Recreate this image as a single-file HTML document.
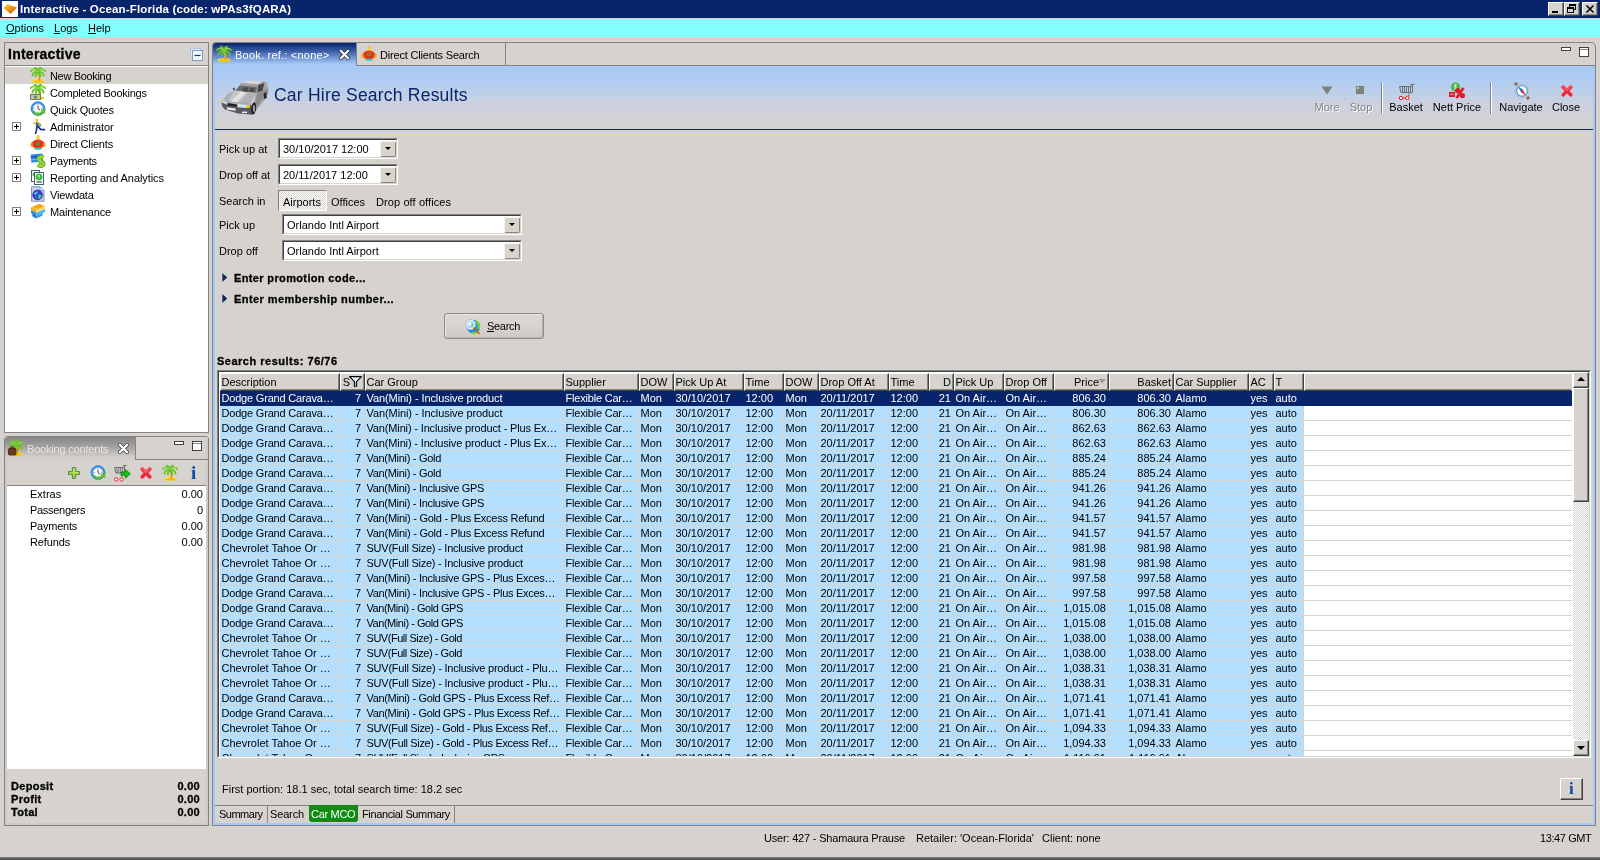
<!DOCTYPE html>
<html><head><meta charset="utf-8"><title>Interactive - Ocean-Florida</title>
<style>
*{box-sizing:border-box}
html,body{margin:0;padding:0}
body{width:1600px;height:860px;background:#d6d3ce;position:relative;overflow:hidden;font-family:"Liberation Sans",sans-serif;font-size:11px;color:#000;line-height:13px}
.abs,.abs>*{position:absolute}
div,span,svg{position:absolute}
.t{white-space:nowrap;height:13px;line-height:13px}
b,u{position:static}
body>*{will-change:transform}
.hb{-webkit-text-stroke:0.3px #000}
/* title */
#title{left:0;top:0;width:1600px;height:18px;background:#08246b}
#title .t{left:20px;top:3px;color:#fff;font-weight:bold;font-size:11.5px;letter-spacing:0.15px}
.wb{top:2px;width:16px;height:14px;background:#d6d3ce;border:1px solid;border-color:#fff #424142 #424142 #fff;box-shadow:inset -1px -1px 0 #848284}
#menu{left:0;top:18px;width:1600px;height:19px;background:#84ffff;border-top:1px solid #d6d3ce}
#menu .t{top:3px}
/* panels */
.panel{box-shadow:inset 0 0 0 1px #848284;background:#d6d3ce}
.white{background:#fff}
.tree .t{left:49px}
.tree svg.ic{left:30px}
.exp{left:11px;width:9px;height:9px;border:1px solid #848284;background:#fff}
.exp:before{content:"";position:absolute;left:1px;top:3px;width:5px;height:1px;background:#000}
.exp:after{content:"";position:absolute;left:3px;top:1px;width:1px;height:5px;background:#000}
/* table */
#tbl{left:217px;top:370px;width:1374px;height:388px;border:1px solid;border-color:#848284 #fff #fff #848284;background:#fff}
#tbl2{left:0;top:0;width:1372px;height:386px;border:1px solid;border-color:#424142 #d6d3ce #d6d3ce #424142;overflow:hidden;background:#fff}
#tin{left:1px;top:1px;width:1352px;height:383px;overflow:hidden;
 background:repeating-linear-gradient(to bottom,#fff 0,#fff 14px,#d6d3ce 14px,#d6d3ce 15px);background-position:0 18px;background-repeat:repeat}
.th-row{left:0;top:0;width:1352px;height:18px;background:#d6d3ce}
.th{top:0;height:18px;background:#d6d3ce;border:1px solid;border-color:#fff #424142 #424142 #fff;box-shadow:inset -1px -1px 0 #848284;overflow:hidden}
.th.fill{border-right-color:#d6d3ce;box-shadow:inset 0 -1px 0 #848284}
.th span{left:0.5px;top:2px;white-space:nowrap;line-height:13px}
.th.r span{left:auto;right:2px}
.th.c1 span{right:14px}
.th.c13 span{right:9px}
.flt{left:8px;top:2px}
.srt{right:2px;top:5px}
.tr{left:0;width:1084px;height:15px;background:#b5dfff}
.tr.sel{width:1352px;background:#08246b;color:#fff}
.td{top:0;height:15px;padding:1px 0 0 1.5px;white-space:nowrap;overflow:hidden;line-height:13px;border-right:1px solid #d6d3ce;border-bottom:1px solid #d6d3ce}
.tr.sel .td{border-color:#08246b}
.td.r{text-align:right;padding-right:3px}
.td.r2{padding-right:2px}
.td.ls{letter-spacing:-0.15px}
.sb{background:#d6d3ce;border:1px solid;border-color:#fff #424142 #424142 #fff;box-shadow:inset -1px -1px 0 #848284}
.sunken{border:1px solid;border-color:#848284 #fff #fff #848284;background:#fff}
.sunken>.in{left:0;top:0;right:0;bottom:0;border:1px solid;border-color:#424142 #d6d3ce #d6d3ce #424142}
.ddb{width:16px;height:16px;background:#d8d4cc;border:1px solid;border-color:#f4f2ee #8a867e #8a867e #f4f2ee;border-radius:2px}
.ddb:after{content:"";position:absolute;left:4px;top:5px;border:3px solid transparent;border-top:3px solid #000;border-bottom:0}
.tb .tl{text-align:center;transform:translateX(-50%)}
.tb .dis{color:#848284;text-shadow:1px 1px 0 #fff}
</style></head><body>

<!-- title bar -->
<div id="title">
 <svg class="ic" width="16" height="16" viewBox="0 0 16 16" style="left:2px;top:1px"><defs><linearGradient id="ag" x1="0" y1="0" x2="1" y2="1"><stop offset="0" stop-color="#ffd028"/><stop offset="0.5" stop-color="#f09018"/><stop offset="1" stop-color="#b84808"/></linearGradient></defs><rect width="16" height="16" fill="#fff"/><path d="M1.4 7L5.6 3.2 15 6.6 8.6 13z" fill="url(#ag)"/></svg>
 <div class="t">Interactive - Ocean-Florida (code: wPAs3fQARA)</div>
 <div class="wb" style="left:1548px"><div style="left:3px;top:8px;width:6px;height:2px;background:#000"></div></div>
 <div class="wb" style="left:1564px"><div style="left:4px;top:1px;width:7px;height:6px;border:1px solid #000;border-top-width:2px"></div><div style="left:2px;top:4px;width:7px;height:6px;border:1px solid #000;border-top-width:2px;background:#d6d3ce"></div></div>
 <div class="wb" style="left:1582px"><svg width="14" height="12" viewBox="0 0 14 12" style="left:0;top:0"><path d="M3.5 2.5l7 7M10.5 2.5l-7 7" stroke="#000" stroke-width="1.6"/></svg></div>
</div>
<!-- menu -->
<div id="menu">
 <div class="t" style="left:6px"><u>O</u>ptions</div>
 <div class="t" style="left:54px"><u>L</u>ogs</div>
 <div class="t" style="left:88px"><u>H</u>elp</div>
</div>

<!-- left top panel -->
<div class="panel" style="left:4px;top:42px;width:205px;height:391px">
 <div class="t hb" style="left:4px;top:5px;font-weight:bold;font-size:14px;letter-spacing:0.25px;height:15px;line-height:15px">Interactive</div>
 <svg class="ic" width="14" height="14" viewBox="0 0 14 14" style="left:186px;top:6px"><rect x="0.5" y="0.5" width="10" height="10" fill="#dcecfc" stroke="#b4c4dc"/><rect x="2.5" y="2.5" width="10" height="10" fill="#f0f8ff" stroke="#8898c0"/><path d="M4.5 7.5h6" stroke="#0c3c7c" stroke-width="1.2"/></svg>
 <div style="left:1px;top:23px;width:203px;height:1px;background:#848284"></div>
 <div class="white tree" style="left:1px;top:24px;width:203px;height:366px">
  <div style="left:0;top:1px;width:203px;height:17px;background:#d6d3ce"></div>
  <svg class="ic" width="16" height="16" viewBox="0 0 16 16" style="left:25px;top:1px"><ellipse cx="8" cy="14" rx="6.6" ry="1.7" fill="#ffe020"/><ellipse cx="8.4" cy="14.5" rx="5" ry="0.9" fill="#f2b800"/><path d="M9 13.6C9.8 11 9.4 8.4 8.2 5.6" stroke="#f2ac1c" stroke-width="1.9" fill="none"/><path d="M9.6 13C10.2 11 9.8 9 9 7" stroke="#c06818" stroke-width="0.8" stroke-dasharray="1 1" fill="none"/><path d="M8 4.8C6 1.8 3 1.6 0.8 4M8 5.2C5 4.2 2.8 6 2.4 8.6M8 4.8C10 1.8 13 1.6 15.2 4M8 5.2C11 4.2 13.2 6 13.6 8.6M8 4.6C8 2.6 9 1 11 0.4M8 4.6C7.6 2.6 6.6 1.2 5 0.6M8 5.4C6.6 6 5.6 7.6 5.8 9.4M8 5.4C9.4 6 10.4 7.6 10.2 9.4" stroke="#66c424" stroke-width="1.8" fill="none" stroke-linecap="round"/><path d="M8 4.8C6.4 2.6 4 2.2 2 3.2M8 4.8C9.6 2.6 12 2.2 14 3.2" stroke="#a4e058" stroke-width="0.9" fill="none"/></svg>
<div class="t" style="left:45px;top:4px;letter-spacing:-0.33px">New Booking</div>
<svg class="ic" width="16" height="16" viewBox="0 0 16 16" style="left:25px;top:18px"><ellipse cx="8" cy="14" rx="6.6" ry="1.7" fill="#ffe020"/><ellipse cx="8.4" cy="14.5" rx="5" ry="0.9" fill="#f2b800"/><path d="M9 13.6C9.8 11 9.4 8.4 8.2 5.6" stroke="#f2ac1c" stroke-width="1.9" fill="none"/><path d="M9.6 13C10.2 11 9.8 9 9 7" stroke="#c06818" stroke-width="0.8" stroke-dasharray="1 1" fill="none"/><path d="M8 4.8C6 1.8 3 1.6 0.8 4M8 5.2C5 4.2 2.8 6 2.4 8.6M8 4.8C10 1.8 13 1.6 15.2 4M8 5.2C11 4.2 13.2 6 13.6 8.6M8 4.6C8 2.6 9 1 11 0.4M8 4.6C7.6 2.6 6.6 1.2 5 0.6M8 5.4C6.6 6 5.6 7.6 5.8 9.4M8 5.4C9.4 6 10.4 7.6 10.2 9.4" stroke="#66c424" stroke-width="1.8" fill="none" stroke-linecap="round"/><path d="M8 4.8C6.4 2.6 4 2.2 2 3.2M8 4.8C9.6 2.6 12 2.2 14 3.2" stroke="#a4e058" stroke-width="0.9" fill="none"/><rect x="0.5" y="10.5" width="10" height="5" fill="#b8c8a0" stroke="#5a6a48" stroke-width="0.8"/><circle cx="5.5" cy="13" r="1.5" fill="#6a7a58"/></svg>
<div class="t" style="left:45px;top:21px;letter-spacing:-0.27px">Completed Bookings</div>
<svg class="ic" width="16" height="16" viewBox="0 0 16 16" style="left:25px;top:35px"><circle cx="8" cy="7.6" r="6.9" fill="#2c96f6"/><circle cx="8" cy="7.6" r="6.9" fill="none" stroke="#1878e0" stroke-width="0.8"/><circle cx="8" cy="7.6" r="4.9" fill="#fafafa" stroke="#b8c4d0" stroke-width="0.6"/><path d="M8 3.4v.9M8 10.9v.9M3.8 7.6h.9M11.3 7.6h.9" stroke="#555" stroke-width="0.8"/><path d="M8 4.8V7.7L10 9" stroke="#303030" stroke-width="0.9" fill="none"/><path d="M3.2 11C5 14.6 10 15.2 13.2 11.6L14.6 13 15.2 8.2 10.6 9.4 12 10.6C9.8 12.8 6.4 12.6 4.8 10.4z" fill="#62cc20" stroke="#3ca010" stroke-width="0.4"/><path d="M6.6 13.6L8.4 15.8 10 13.6z" fill="#62cc20"/></svg>
<div class="t" style="left:45px;top:38px;letter-spacing:-0.25px">Quick Quotes</div>
<svg class="ic" width="16" height="16" viewBox="0 0 16 16" style="left:25px;top:52px"><path d="M5.4 0.8L8.6 1.4 8.2 3.8 5.4 3.4z" fill="#f4c030"/><path d="M3 5.6L5.6 4.6" stroke="#f0b020" stroke-width="1.4"/><path d="M6 4L10 5.4 9 9.6 5.6 8z" fill="#3a62c0"/><path d="M8.6 4.6L11.4 6.6 10.4 9 8.4 8z" fill="#58b830"/><path d="M7.6 4.2L9.4 5 8.8 7.4" stroke="#f0c020" stroke-width="1" fill="none"/><path d="M8.4 9L10.6 11.4 14.4 11.6M7 8.6L6.4 12.4 5.6 15.4" stroke="#182c8c" stroke-width="1.7" fill="none" stroke-linecap="round"/></svg>
<div class="t" style="left:45px;top:55px;letter-spacing:-0.09px">Administrator</div>
<div class="exp" style="left:7px;top:56px"></div>
<svg class="ic" width="16" height="16" viewBox="0 0 16 16" style="left:25px;top:69px"><path d="M6.4 0.6h3.4l-.4 1.2H7z" fill="#f0a818"/><circle cx="8" cy="3.2" r="1.9" fill="#ffd23c"/><circle cx="3" cy="9.6" r="2.6" fill="#f49a1c"/><circle cx="13" cy="9.6" r="2.6" fill="#f49a1c"/><path d="M2.2 7.4C3.4 5.4 5.6 4.6 8 4.6S12.6 5.4 13.8 7.4L12.4 12.6H3.6z" fill="#ee3a1c"/><path d="M4.6 7h6.8v6.4H4.6z" fill="#e82818"/><rect x="6.2" y="7.2" width="3.6" height="3" fill="#30c040"/><path d="M7 8h2M8 7.4v2.6" stroke="#e82818" stroke-width="0.7"/><rect x="5" y="12.6" width="6" height="2.2" fill="#28c8d8"/><path d="M3.2 13.4h1.6M11.2 13.4h1.6" stroke="#f0c020" stroke-width="1.4"/></svg>
<div class="t" style="left:45px;top:72px;letter-spacing:-0.17px">Direct Clients</div>
<svg class="ic" width="17" height="17" viewBox="0 0 17 17" style="left:25px;top:86px"><path d="M0.6 2.6L12.4 1.4 13.2 9.6 1.4 10.8z" fill="#2c8cf0"/><path d="M0.8 4.4L12.6 3.2 12.8 5 1 6.2z" fill="#1458b0"/><path d="M1.2 7.6l6-.6" stroke="#8cc8ff" stroke-width="0.8"/><path d="M13.4 5.6C11.4 4 8 4.8 8.2 7.2 8.4 9.6 13.6 9.2 13.6 11.8 13.6 14.2 10 14.8 7.8 13" stroke="#4a9410" stroke-width="3.6" fill="none"/><path d="M10.8 3v13" stroke="#4a9410" stroke-width="2.4"/><path d="M13.4 5.6C11.4 4 8 4.8 8.2 7.2 8.4 9.6 13.6 9.2 13.6 11.8 13.6 14.2 10 14.8 7.8 13" stroke="#a4e03c" stroke-width="2" fill="none"/><path d="M10.8 3.4v12.2" stroke="#a4e03c" stroke-width="1.1"/></svg>
<div class="t" style="left:45px;top:89px;letter-spacing:-0.27px">Payments</div>
<div class="exp" style="left:7px;top:90px"></div>
<svg class="ic" width="16" height="16" viewBox="0 0 16 16" style="left:25px;top:103px"><rect x="1.5" y="1.5" width="8" height="11" fill="#fff" stroke="#3c6074"/><circle cx="4.4" cy="5.4" r="2" fill="#40c040"/><rect x="4.5" y="3.5" width="9" height="12" fill="#fff" stroke="#3c6074"/><circle cx="9" cy="8" r="3.1" fill="#2cc42c"/><circle cx="9" cy="8" r="3.1" fill="none" stroke="#1c9a1c" stroke-width="0.6"/><path d="M9 6v2.2M9 9.4v.6" stroke="#fff" stroke-width="1.1"/><path d="M6.4 13h5.4" stroke="#202020" stroke-width="1"/></svg>
<div class="t" style="left:45px;top:106px;letter-spacing:-0.07px">Reporting and Analytics</div>
<div class="exp" style="left:7px;top:107px"></div>
<svg class="ic" width="16" height="16" viewBox="0 0 16 16" style="left:25px;top:120px"><path d="M1.5 0.7h8.6L14 4.6v10.7H1.5z" fill="#c4d0ee" stroke="#8098bc"/><path d="M10.1 0.7v3.9H14z" fill="#eef2fb" stroke="#8098bc" stroke-width="0.7"/><circle cx="7.6" cy="9" r="4.9" fill="#3c38d0"/><circle cx="7.6" cy="9" r="4.9" fill="none" stroke="#2c2498" stroke-width="0.6"/><path d="M4 7.6C5 5.6 7 5 8.4 5.6 8 7 6.6 7.4 6.4 8.8 5.4 9.4 4.4 8.8 4 7.6z" fill="#38c8e8"/><path d="M8.6 8.4C10 8 11.4 8.8 11.6 10 11 11.8 9.6 12.8 8.4 12.6 8 11.2 8.2 9.6 8.6 8.4z" fill="#48d080"/><path d="M5 10.6c.8.2 1.4.8 1.6 1.8" stroke="#38c8e8" stroke-width="0.9" fill="none"/></svg>
<div class="t" style="left:45px;top:123px;letter-spacing:-0.17px">Viewdata</div>
<svg class="ic" width="16" height="16" viewBox="0 0 16 16" style="left:25px;top:137px"><path d="M1 4.4L9.4 0.8 15 3.2 6.4 7z" fill="#ffc41c"/><path d="M3 4.2L10 1.4M5 5L12 2.2M7 5.8L13.6 3" stroke="#e88c00" stroke-width="0.8"/><path d="M1 4.4L6.4 7v2.4L1 6.8z" fill="#f0a000"/><path d="M6.4 7L15 3.2v2.4L6.4 9.4z" fill="#ffd860"/><path d="M1 7.2l5.4 2.6v3L1 10.2z" fill="#1c86e0"/><path d="M6.4 9.8L15 6v3l-8.6 3.8z" fill="#48b4f4"/><path d="M2.4 10.8l4 2v2.8l-4-2.4z" fill="#1468c0"/><path d="M6.4 12.8l6.2-2.8v2.4l-6.2 3.2z" fill="#2c9ce8"/></svg>
<div class="t" style="left:45px;top:140px;letter-spacing:-0.18px">Maintenance</div>
<div class="exp" style="left:7px;top:141px"></div>
 </div>
</div>

<!-- left bottom panel -->
<div class="panel" style="left:4px;top:436px;width:205px;height:390px;border-radius:4px 4px 0 0">
 <div style="left:1px;top:1px;width:203px;height:388px;border:2px solid #cdc9cc;border-top:0"></div>
 <div style="left:1px;top:1px;width:131px;height:25px;background:linear-gradient(#848484,#a5a3a2 40%,#d0cdca 80%,#d6d3ce);border-radius:3px 0 0 0"></div>
 <div style="left:131px;top:1px;width:1px;height:23px;background:#848284"></div>
 <div style="left:131px;top:23px;width:73px;height:1px;background:#848284"></div>
 <svg class="ic" width="16" height="16" viewBox="0 0 16 16" style="left:4px;top:4px"><ellipse cx="8" cy="14" rx="6.6" ry="1.7" fill="#ffe020"/><ellipse cx="8.4" cy="14.5" rx="5" ry="0.9" fill="#f2b800"/><path d="M9 13.6C9.8 11 9.4 8.4 8.2 5.6" stroke="#f2ac1c" stroke-width="1.9" fill="none"/><path d="M9.6 13C10.2 11 9.8 9 9 7" stroke="#c06818" stroke-width="0.8" stroke-dasharray="1 1" fill="none"/><path d="M8 4.8C6 1.8 3 1.6 0.8 4M8 5.2C5 4.2 2.8 6 2.4 8.6M8 4.8C10 1.8 13 1.6 15.2 4M8 5.2C11 4.2 13.2 6 13.6 8.6M8 4.6C8 2.6 9 1 11 0.4M8 4.6C7.6 2.6 6.6 1.2 5 0.6M8 5.4C6.6 6 5.6 7.6 5.8 9.4M8 5.4C9.4 6 10.4 7.6 10.2 9.4" stroke="#66c424" stroke-width="1.8" fill="none" stroke-linecap="round"/><path d="M8 4.8C6.4 2.6 4 2.2 2 3.2M8 4.8C9.6 2.6 12 2.2 14 3.2" stroke="#a4e058" stroke-width="0.9" fill="none"/><rect x="0.5" y="8.5" width="7.5" height="6.5" rx="1" fill="#6a3a18" stroke="#3c200c" stroke-width="0.8"/><path d="M2.8 8.5V7h3v1.5" stroke="#3c200c" fill="none"/></svg>
 <div class="t" style="left:23px;top:7px;color:#e6e4e0;letter-spacing:-0.19px">Booking contents</div>
 <svg width="11" height="11" viewBox="0 0 11 11" style="left:114px;top:7px"><path d="M1.8 1.8l7.4 7.4M9.2 1.8l-7.4 7.4" stroke="#505050" stroke-width="3.8" stroke-linecap="round"/><path d="M1.8 1.8l7.4 7.4M9.2 1.8l-7.4 7.4" stroke="#fff" stroke-width="2.2" stroke-linecap="round"/></svg>
 <div style="left:170px;top:5px;width:10px;height:4px;border:1px solid #424142;background:#fff"></div>
 <div style="left:188px;top:5px;width:10px;height:10px;border:1px solid #424142;background:#fff"><div style="left:0;top:1px;width:8px;height:1px;background:#848284"></div></div>
 <div style="left:3px;top:49px;width:199px;height:1px;background:#848284"></div>
 <svg class="ic" width="16" height="16" viewBox="0 0 16 16" style="left:62px;top:29px"><path d="M6.4 2.5h3.2v3.9h3.9v3.2H9.6v3.9H6.4V9.6H2.5V6.4h3.9z" fill="#a8cc48" stroke="#4c9440" stroke-width="1"/><path d="M7.2 3.4h1.6v3.8h3.8v.9H7.2z" fill="#cce47c"/></svg>
<svg class="ic" width="16" height="16" viewBox="0 0 16 16" style="left:86px;top:29px"><circle cx="8" cy="7.6" r="6.9" fill="#2c96f6"/><circle cx="8" cy="7.6" r="6.9" fill="none" stroke="#1878e0" stroke-width="0.8"/><circle cx="8" cy="7.6" r="4.9" fill="#fafafa" stroke="#b8c4d0" stroke-width="0.6"/><path d="M8 3.4v.9M8 10.9v.9M3.8 7.6h.9M11.3 7.6h.9" stroke="#555" stroke-width="0.8"/><path d="M8 4.8V7.7L10 9" stroke="#303030" stroke-width="0.9" fill="none"/><path d="M3.2 11C5 14.6 10 15.2 13.2 11.6L14.6 13 15.2 8.2 10.6 9.4 12 10.6C9.8 12.8 6.4 12.6 4.8 10.4z" fill="#62cc20" stroke="#3ca010" stroke-width="0.4"/><path d="M6.6 13.6L8.4 15.8 10 13.6z" fill="#62cc20"/></svg>
<svg class="ic" width="18" height="18" viewBox="0 0 18 18" style="left:109px;top:28px"><path d="M1.5 3.5H11.5V9H2.8z" fill="none" stroke="#707070"/><path d="M4 3.5v5.5M5.8 3.5v5.5M7.6 3.5v5.5M9.4 3.5v5.5" stroke="#707070" stroke-width="0.9"/><path d="M11.5 3.5V1.5M10 1.5H13.5" stroke="#707070" fill="none"/><path d="M10 9l-.8 3.4" stroke="#608080"/><circle cx="3.2" cy="15.4" r="1.7" fill="#fff" stroke="#e81010" stroke-width="0.9"/><circle cx="8.6" cy="15.4" r="1.7" fill="#fff" stroke="#e81010" stroke-width="0.9"/><path d="M8 8h4.4V5.4l5 4.4-5 4.4v-2.6H8z" fill="#18c018" stroke="#0c7c0c" stroke-width="0.8"/></svg>
<svg class="ic" width="16" height="16" viewBox="0 0 16 16" style="left:134px;top:29px"><path d="M4.2 4.2l7.6 7.6M11.8 4.2l-7.6 7.6" stroke="#f4a0a8" stroke-width="4.6" stroke-linecap="round"/><path d="M4.2 4.2l7.6 7.6M11.8 4.2l-7.6 7.6" stroke="#e8283c" stroke-width="3.3" stroke-linecap="round"/><path d="M4.2 3.8l3.8 3.6 3.8-3.6" stroke="#ff8c94" stroke-width="1" fill="none" stroke-linecap="round"/></svg>
<svg class="ic" width="16" height="16" viewBox="0 0 16 16" style="left:158px;top:29px"><ellipse cx="8" cy="14" rx="6.6" ry="1.7" fill="#ffe020"/><ellipse cx="8.4" cy="14.5" rx="5" ry="0.9" fill="#f2b800"/><path d="M9 13.6C9.8 11 9.4 8.4 8.2 5.6" stroke="#f2ac1c" stroke-width="1.9" fill="none"/><path d="M9.6 13C10.2 11 9.8 9 9 7" stroke="#c06818" stroke-width="0.8" stroke-dasharray="1 1" fill="none"/><path d="M8 4.8C6 1.8 3 1.6 0.8 4M8 5.2C5 4.2 2.8 6 2.4 8.6M8 4.8C10 1.8 13 1.6 15.2 4M8 5.2C11 4.2 13.2 6 13.6 8.6M8 4.6C8 2.6 9 1 11 0.4M8 4.6C7.6 2.6 6.6 1.2 5 0.6M8 5.4C6.6 6 5.6 7.6 5.8 9.4M8 5.4C9.4 6 10.4 7.6 10.2 9.4" stroke="#66c424" stroke-width="1.8" fill="none" stroke-linecap="round"/><path d="M8 4.8C6.4 2.6 4 2.2 2 3.2M8 4.8C9.6 2.6 12 2.2 14 3.2" stroke="#a4e058" stroke-width="0.9" fill="none"/></svg>
<div class="t" style="left:187px;top:28px;font-family:'Liberation Serif',serif;font-weight:bold;font-size:19px;height:18px;line-height:18px;color:#0a4aa8">i</div>
 <div class="white" style="left:3px;top:50px;width:199px;height:283px">
  <div class="t" style="left:23px;top:2px">Extras</div><div class="t" style="right:3px;top:2px">0.00</div>
  <div class="t" style="left:23px;top:18px;letter-spacing:-0.3px">Passengers</div><div class="t" style="right:3px;top:18px">0</div>
  <div class="t" style="left:23px;top:34px;letter-spacing:-0.24px">Payments</div><div class="t" style="right:3px;top:34px">0.00</div>
  <div class="t" style="left:23px;top:50px;letter-spacing:-0.14px">Refunds</div><div class="t" style="right:3px;top:50px">0.00</div>
 </div>
 <div class="t hb" style="left:7px;top:344px;font-weight:bold;letter-spacing:0.3px">Deposit</div><div class="t hb" style="right:9px;top:344px;font-weight:bold;letter-spacing:0.3px">0.00</div>
 <div class="t hb" style="left:7px;top:357px;font-weight:bold;letter-spacing:0.3px">Profit</div><div class="t hb" style="right:9px;top:357px;font-weight:bold;letter-spacing:0.3px">0.00</div>
 <div class="t hb" style="left:7px;top:370px;font-weight:bold;letter-spacing:0.3px">Total</div><div class="t hb" style="right:9px;top:370px;font-weight:bold;letter-spacing:0.3px">0.00</div>
</div>

<!-- main panel -->
<div class="panel" style="left:212px;top:42px;width:1384px;height:784px;border-radius:4px 5px 0 0">
 <!-- blue inner border -->
 <div style="left:1px;top:24px;width:1382px;height:759px;border:2px solid #a5caf7;border-top:0"></div>
 <!-- tabs -->
 <div style="left:1px;top:1px;width:144px;height:23px;background:linear-gradient(#08246b,#3a5ca6 35%,#a5caf7 92%);border-radius:3px 0 0 0;border-right:1px solid #848284"></div>
 <div style="left:145px;top:23px;width:1238px;height:1px;background:#848284"></div>
 <div style="left:293px;top:1px;width:1px;height:22px;background:#848284"></div>
 <svg class="ic" width="16" height="16" viewBox="0 0 16 16" style="left:4px;top:4px"><ellipse cx="8" cy="14" rx="6.6" ry="1.7" fill="#ffe020"/><ellipse cx="8.4" cy="14.5" rx="5" ry="0.9" fill="#f2b800"/><path d="M9 13.6C9.8 11 9.4 8.4 8.2 5.6" stroke="#f2ac1c" stroke-width="1.9" fill="none"/><path d="M9.6 13C10.2 11 9.8 9 9 7" stroke="#c06818" stroke-width="0.8" stroke-dasharray="1 1" fill="none"/><path d="M8 4.8C6 1.8 3 1.6 0.8 4M8 5.2C5 4.2 2.8 6 2.4 8.6M8 4.8C10 1.8 13 1.6 15.2 4M8 5.2C11 4.2 13.2 6 13.6 8.6M8 4.6C8 2.6 9 1 11 0.4M8 4.6C7.6 2.6 6.6 1.2 5 0.6M8 5.4C6.6 6 5.6 7.6 5.8 9.4M8 5.4C9.4 6 10.4 7.6 10.2 9.4" stroke="#66c424" stroke-width="1.8" fill="none" stroke-linecap="round"/><path d="M8 4.8C6.4 2.6 4 2.2 2 3.2M8 4.8C9.6 2.6 12 2.2 14 3.2" stroke="#a4e058" stroke-width="0.9" fill="none"/></svg>
 <div class="t" style="left:23px;top:7px;color:#fff;letter-spacing:0.22px">Book. ref.: &lt;none&gt;</div>
 <svg width="11" height="11" viewBox="0 0 11 11" style="left:127px;top:7px"><path d="M1.8 1.8l7.4 7.4M9.2 1.8l-7.4 7.4" stroke="#303848" stroke-width="3.8" stroke-linecap="round"/><path d="M1.8 1.8l7.4 7.4M9.2 1.8l-7.4 7.4" stroke="#fff" stroke-width="2.2" stroke-linecap="round"/></svg>
 <svg class="ic" width="16" height="16" viewBox="0 0 16 16" style="left:149px;top:4px"><path d="M6.4 0.6h3.4l-.4 1.2H7z" fill="#f0a818"/><circle cx="8" cy="3.2" r="1.9" fill="#ffd23c"/><circle cx="3" cy="9.6" r="2.6" fill="#f49a1c"/><circle cx="13" cy="9.6" r="2.6" fill="#f49a1c"/><path d="M2.2 7.4C3.4 5.4 5.6 4.6 8 4.6S12.6 5.4 13.8 7.4L12.4 12.6H3.6z" fill="#ee3a1c"/><path d="M4.6 7h6.8v6.4H4.6z" fill="#e82818"/><rect x="6.2" y="7.2" width="3.6" height="3" fill="#30c040"/><path d="M7 8h2M8 7.4v2.6" stroke="#e82818" stroke-width="0.7"/><rect x="5" y="12.6" width="6" height="2.2" fill="#28c8d8"/><path d="M3.2 13.4h1.6M11.2 13.4h1.6" stroke="#f0c020" stroke-width="1.4"/></svg>
 <div class="t" style="left:168px;top:7px;letter-spacing:-0.18px">Direct Clients Search</div>
 <div style="left:1349px;top:5px;width:10px;height:4px;border:1px solid #424142;background:#fff"></div>
 <div style="left:1367px;top:5px;width:10px;height:10px;border:1px solid #424142;background:#fff"><div style="left:0;top:1px;width:8px;height:1px;background:#848284"></div></div>

 <!-- header -->
 <div class="tb" style="left:3px;top:24px;width:1378px;height:63px;background:linear-gradient(#a6c9f7 0%,#b0cdf3 25%,#bfd0e8 45%,#cbd0e2 58%,#d0d2da 75%,#d5d2cc 100%)">
  <div style="left:0;top:0;width:1378px;height:64px;background:repeating-linear-gradient(rgba(255,255,255,0.05) 0 1px,rgba(0,0,0,0.012) 1px 2px)"></div>
  <svg class="ic" width="48" height="36" viewBox="0 0 48 36" style="left:6px;top:14px"><path d="M35 13L36.5 4.2 41.5 1 45.5 2.6 47.6 9 46.6 14 44 19 33 33.4 30 34.6z" fill="#a6a6a8"/><path d="M36 13.5L46.8 8.5 47 13 33.5 29z" fill="#8c8c8e"/><path d="M20.4 3.2L23.5 1 41.5 1 36.5 4.6z" fill="#d6d6d6"/><path d="M14.5 10.5L20.4 3.2 36.5 4.6 35.2 13z" fill="#6a6a6c"/><path d="M20.4 3.2L36.5 4.6 36.1 7 18.4 5.6z" fill="#a4a4a6"/><path d="M22.5 7.5h4.5l-.6 4.4-5.6-.5zM29 8h4.6l-.7 4.6-4.5-.4z" fill="#4c4c4e"/><path d="M37.3 5L43.4 3 41.6 10.4 36.4 12.4z" fill="#454547"/><path d="M7.4 21.4L12.9 10.9 35.2 13 29.5 24.2z" fill="#c6c6c8"/><path d="M18 22.8L27 12.3 35.2 13 29.5 24.2z" fill="#b2b2b4"/><path d="M9.5 21.6L20 11.6 25.5 12.2 15.5 22.4z" fill="#e2e2e2"/><path d="M0.8 22L6 14 12.9 10.9 7.4 21.4z" fill="#b0b0b2"/><path d="M0.5 22.4L7.4 21.4 29.5 24.2 31.6 27 31.6 34.7 17 33.6 4 29.4 1 26z" fill="#5a5a5c"/><path d="M0.8 22L7.4 21.4 29.5 24.2 29 27.6 16.4 26.4 6 24.6z" fill="#b4b4b6"/><path d="M1.2 20.4L5.5 21.8 5.7 24.4 1.6 23z" fill="#b8dcf8"/><path d="M0.8 19.6l1.4.6v2l-1.2-.4z" fill="#e8d020"/><path d="M16.6 24.2L25 25 25 27.9 16.8 27.2z" fill="#cfe8fb"/><path d="M25 25L28.2 25.2 28.2 28 25 27.9z" fill="#f2d200"/><path d="M6.6 23L16 24.4 16 26.8 6.8 25.4z" fill="#1c1c1c"/><path d="M5.9 27.2L14.7 28.6 14.7 30.8 5.9 29.4z" fill="#ececec"/><rect x="21" y="31.6" width="5" height="1.5" fill="#f4f4f4"/><ellipse cx="32.6" cy="28.4" rx="2.5" ry="6.2" fill="#262626" transform="rotate(7 32.6 28.4)"/><ellipse cx="33" cy="28.6" rx="1.1" ry="3.6" fill="#9c9c9e"/><path d="M42.6 13.4L45.4 12 45.8 18 43.2 19z" fill="#262626"/><path d="M11.8 8l1.6-.2.8 2.6-1.4.2z" fill="#3c3c3c"/></svg>
  <div class="t" style="left:59px;top:18px;font-size:17.5px;letter-spacing:0.22px;height:22px;line-height:22px;color:#08246b">Car Hire Search Results</div>
  <svg class="ic" width="12" height="9" viewBox="0 0 12 9" style="left:1106px;top:20px"><path d="M0.5 0.5h11L6 8.5z" fill="#808080"/></svg>
<div class="t tl dis" style="left:1112px;top:35px">More</div>
<svg class="ic" width="8" height="8" viewBox="0 0 8 8" style="left:1141px;top:20px"><rect width="8" height="8" fill="#808080"/><rect x="1" y="1" width="2" height="2" fill="#c8c8c8"/></svg>
<div class="t tl dis" style="left:1146px;top:35px">Stop</div>
<svg class="ic" width="18" height="18" viewBox="0 0 18 18" style="left:1182px;top:16px"><path d="M2.5 4.5H15.5V10.5H4z" fill="none" stroke="#707070"/><path d="M5.5 4.5v6M7.5 4.5v6M9.5 4.5v6M11.5 4.5v6M13.5 4.5v6" stroke="#707070" stroke-width="1"/><path d="M15.5 4.5V2.5M13.5 2.5H17.5" stroke="#707070" fill="none"/><path d="M12.5 10.5L11.5 14" stroke="#608080" fill="none"/><path d="M5.8 16h3" stroke="#e01818" stroke-width="0.9"/><circle cx="4" cy="16" r="1.7" fill="#fff" stroke="#e81010" stroke-width="1"/><circle cx="10.4" cy="16" r="1.7" fill="#fff" stroke="#e81010" stroke-width="1"/></svg>
<div class="t tl" style="left:1191px;top:35px">Basket</div>
<svg class="ic" width="18" height="18" viewBox="0 0 18 18" style="left:1233px;top:16px"><circle cx="7.5" cy="5" r="4.6" fill="#48b848"/><path d="M9 3.4C8 2.6 6.2 3 6.2 4.2S9 5.4 9 6.6 7 7.8 6 7M7.6 2v6.4" stroke="#d8f8d0" stroke-width="1" fill="none"/><rect x="1" y="10" width="6" height="5" fill="#e01828"/><rect x="2.2" y="11.6" width="3.4" height="1.4" fill="#ff9098"/><circle cx="9.6" cy="8.6" r="2.6" fill="#e01828"/><circle cx="14.4" cy="13.6" r="2.6" fill="#e01828"/><path d="M15.5 6L8.5 16" stroke="#e01828" stroke-width="2.6"/></svg>
<div class="t tl" style="left:1242px;top:35px">Nett Price</div>
<svg class="ic" width="18" height="18" viewBox="0 0 18 18" style="left:1298px;top:16px"><circle cx="9" cy="9" r="6.8" fill="#f4f8fc" stroke="#b8c4d0" stroke-width="1.6"/><circle cx="9" cy="9" r="5.4" fill="#fff" stroke="#58a0e8" stroke-width="1.4"/><path d="M5 4.4L10.4 8 8 10.2z" fill="#2868d8"/><path d="M13 13.6L7.6 10 10 7.8z" fill="#e83020"/><rect x="1.5" y="0.5" width="3" height="3" fill="#8a6a40" transform="rotate(-35 3 2)"/><rect x="13.5" y="14.5" width="3" height="3" fill="#8a6a40" transform="rotate(-35 15 16)"/></svg>
<div class="t tl" style="left:1306px;top:35px">Navigate</div>
<svg class="ic" width="16" height="16" viewBox="0 0 16 16" style="left:1344px;top:17px"><path d="M4.2 4.2l7.6 7.6M11.8 4.2l-7.6 7.6" stroke="#f4a0a8" stroke-width="4.6" stroke-linecap="round"/><path d="M4.2 4.2l7.6 7.6M11.8 4.2l-7.6 7.6" stroke="#e8283c" stroke-width="3.3" stroke-linecap="round"/><path d="M4.2 3.8l3.8 3.6 3.8-3.6" stroke="#ff8c94" stroke-width="1" fill="none" stroke-linecap="round"/></svg>
<div class="t tl" style="left:1351px;top:35px">Close</div>
<div style="left:1166px;top:16px;width:1px;height:32px;background:#848284"></div><div style="left:1167px;top:16px;width:1px;height:32px;background:#fff"></div>
<div style="left:1275px;top:16px;width:1px;height:32px;background:#848284"></div><div style="left:1276px;top:16px;width:1px;height:32px;background:#fff"></div>
 </div>
 <div style="left:3px;top:87px;width:1378px;height:1px;background:#08246b"></div>

 <!-- form -->
 <div class="t" style="left:7px;top:101px">Pick up at</div>
 <div class="sunken" style="left:66px;top:96px;width:120px;height:21px"><div class="in"></div><div class="t" style="left:4px;top:4px">30/10/2017 12:00</div><div class="ddb" style="left:101px;top:2px"></div></div>
 <div class="t" style="left:7px;top:127px">Drop off at</div>
 <div class="sunken" style="left:66px;top:122px;width:120px;height:21px"><div class="in"></div><div class="t" style="left:4px;top:4px">20/11/2017 12:00</div><div class="ddb" style="left:101px;top:2px"></div></div>
 <div class="t" style="left:7px;top:153px">Search in</div>
 <div style="left:66px;top:148px;width:49px;height:21px;border:1px solid;border-color:#848284 #fff #fff #848284;background:#ebe9e6;background-image:repeating-conic-gradient(#fff 0 25%,#d6d3ce 0 50%);background-size:2px 2px"></div>
 <div class="t" style="left:71px;top:154px">Airports</div>
 <div class="t" style="left:119px;top:154px">Offices</div>
 <div class="t" style="left:164px;top:154px;letter-spacing:0.1px">Drop off offices</div>
 <div class="t" style="left:7px;top:177px">Pick up</div>
 <div class="sunken" style="left:70px;top:172px;width:240px;height:21px"><div class="in"></div><div class="t" style="left:4px;top:4px">Orlando Intl Airport</div><div class="ddb" style="left:221px;top:2px"></div></div>
 <div class="t" style="left:7px;top:203px">Drop off</div>
 <div class="sunken" style="left:70px;top:198px;width:240px;height:21px"><div class="in"></div><div class="t" style="left:4px;top:4px">Orlando Intl Airport</div><div class="ddb" style="left:221px;top:2px"></div></div>
 <svg width="6" height="9" viewBox="0 0 6 9" style="left:10px;top:231px"><path d="M0.4 0l4.8 4.5L0.4 9z" fill="#08246b"/></svg>
 <div class="t hb" style="left:22px;top:230px;font-weight:bold;letter-spacing:0.36px">Enter promotion code...</div>
 <svg width="6" height="9" viewBox="0 0 6 9" style="left:10px;top:252px"><path d="M0.4 0l4.8 4.5L0.4 9z" fill="#08246b"/></svg>
 <div class="t hb" style="left:22px;top:251px;font-weight:bold;letter-spacing:0.44px">Enter membership number...</div>
 <div style="left:232px;top:271px;width:100px;height:26px;border:1px solid #8e8c8a;border-radius:3px;background:linear-gradient(#dcd9d4,#d6d3ce 55%,#cdcac4);box-shadow:inset 1px 1px 0 #e8e6e2,inset -1px -1px 0 #b8b5b0"></div>
 <svg class="ic" width="17" height="17" viewBox="0 0 17 17" style="left:252px;top:276px"><circle cx="9.4" cy="8.8" r="6.8" fill="#1c8cf0"/><path d="M12 3C14.6 4.6 15.6 7.6 14.4 11M8 14.6C9.6 15.4 11.6 15 12.8 14" stroke="#7cd828" stroke-width="2.2" fill="none"/><circle cx="6.6" cy="6.6" r="4.4" fill="#a8dcf4" stroke="#e4ecf4" stroke-width="1.6"/><circle cx="6.6" cy="6.6" r="5.2" fill="none" stroke="#90a0b0" stroke-width="0.5"/><circle cx="5.6" cy="5.8" r="1.6" fill="#f4fcff"/><path d="M7.4 7.4c1 .2 1.8-.4 2-1.4" stroke="#58c070" stroke-width="1.2" fill="none"/><path d="M10 10.2l5 5.2" stroke="#b86820" stroke-width="1.7" stroke-linecap="round"/></svg>
 <div class="t" style="left:275px;top:278px;letter-spacing:-0.3px"><u>S</u>earch</div>
 <div class="t hb" style="left:5px;top:313px;font-weight:bold;letter-spacing:0.5px">Search results: 76/76</div>

 <!-- footer -->
 <div class="t" style="left:10px;top:741px">First portion: 18.1 sec, total search time: 18.2 sec</div>
 <div style="left:1348px;top:736px;width:23px;height:22px;background:#d6d3ce;border:1px solid;border-color:#fff #424142 #424142 #fff;box-shadow:inset -1px -1px 0 #848284"><div class="t" style="left:8px;top:1px;font-family:'Liberation Serif',serif;font-weight:bold;font-size:17px;line-height:17px;height:17px;color:#0a4aa8">i</div></div>
 <div style="left:3px;top:763px;width:1378px;height:1px;background:#848284"></div>
 <div class="t" style="left:7px;top:766px;letter-spacing:-0.5px">Summary</div>
 <div style="left:55px;top:764px;width:1px;height:17px;background:#848284"></div>
 <div class="t" style="left:58px;top:766px;letter-spacing:-0.15px">Search</div>
 <div style="left:97px;top:763px;width:49px;height:17px;background:#128a12;border-radius:0 0 3px 3px"></div>
 <div class="t" style="left:99px;top:766px;color:#fff;letter-spacing:-0.3px">Car MCO</div>
 <div class="t" style="left:150px;top:766px;letter-spacing:-0.37px">Financial Summary</div>
 <div style="left:242px;top:764px;width:1px;height:17px;background:#848284"></div>
</div>

<!-- table -->
<div id="tbl"><div id="tbl2">
 <div id="tin">
<div class="th-row">
<div class="th c0" style="left:0px;width:120px"><span>Description</span></div>
<div class="th r c1" style="left:120px;width:25px"><span>S</span><svg class="flt" width="13" height="11" viewBox="0 0 13 11"><path d="M0.6 0.6h11.8L7.6 5.6v4.6H5.4V5.6z" fill="#e4eefa" stroke="#000" stroke-width="1.1" stroke-linejoin="round"/><path d="M5.9 6v3.6h1.2V6z" fill="#9ab4dc"/></svg></div>
<div class="th c2" style="left:145px;width:199px"><span>Car Group</span></div>
<div class="th c3" style="left:344px;width:75px"><span>Supplier</span></div>
<div class="th c4" style="left:419px;width:35px"><span>DOW</span></div>
<div class="th c5" style="left:454px;width:70px"><span>Pick Up At</span></div>
<div class="th c6" style="left:524px;width:40px"><span>Time</span></div>
<div class="th c7" style="left:564px;width:35px"><span>DOW</span></div>
<div class="th c8" style="left:599px;width:70px"><span>Drop Off At</span></div>
<div class="th c9" style="left:669px;width:40px"><span>Time</span></div>
<div class="th r c10" style="left:709px;width:25px"><span>D</span></div>
<div class="th c11" style="left:734px;width:50px"><span>Pick Up</span></div>
<div class="th c12" style="left:784px;width:50px"><span>Drop Off</span></div>
<div class="th r c13" style="left:834px;width:55px"><span>Price</span><svg class="srt" width="8" height="5" viewBox="0 0 8 5"><path d="M0 0h8L4 4.5z" fill="#9a9a9a"/></svg></div>
<div class="th r c14" style="left:889px;width:65px"><span>Basket</span></div>
<div class="th c15" style="left:954px;width:75px"><span>Car Supplier</span></div>
<div class="th c16" style="left:1029px;width:25px"><span>AC</span></div>
<div class="th c17" style="left:1054px;width:30px"><span>T</span></div>
<div class="th fill" style="left:1084px;width:268px"></div>
</div>
<div class="tr sel" style="top:18px">
<div class="td" style="left:0px;width:120px;letter-spacing:-0.19px">Dodge Grand Carava…</div>
<div class="td r" style="left:120px;width:25px">7</div>
<div class="td" style="left:145px;width:199px;letter-spacing:-0.09px">Van(Mini) - Inclusive product</div>
<div class="td" style="left:344px;width:75px;letter-spacing:-0.2px">Flexible Car…</div>
<div class="td" style="left:419px;width:35px">Mon</div>
<div class="td" style="left:454px;width:70px">30/10/2017</div>
<div class="td" style="left:524px;width:40px">12:00</div>
<div class="td" style="left:564px;width:35px">Mon</div>
<div class="td" style="left:599px;width:70px">20/11/2017</div>
<div class="td" style="left:669px;width:40px">12:00</div>
<div class="td r r2" style="left:709px;width:25px">21</div>
<div class="td" style="left:734px;width:50px">On Air…</div>
<div class="td" style="left:784px;width:50px">On Air…</div>
<div class="td r r2" style="left:834px;width:55px">806.30</div>
<div class="td r r2" style="left:889px;width:65px">806.30</div>
<div class="td" style="left:954px;width:75px">Alamo</div>
<div class="td" style="left:1029px;width:25px">yes</div>
<div class="td" style="left:1054px;width:30px">auto</div>
</div>
<div class="tr" style="top:33px">
<div class="td" style="left:0px;width:120px;letter-spacing:-0.19px">Dodge Grand Carava…</div>
<div class="td r" style="left:120px;width:25px">7</div>
<div class="td" style="left:145px;width:199px;letter-spacing:-0.09px">Van(Mini) - Inclusive product</div>
<div class="td" style="left:344px;width:75px;letter-spacing:-0.2px">Flexible Car…</div>
<div class="td" style="left:419px;width:35px">Mon</div>
<div class="td" style="left:454px;width:70px">30/10/2017</div>
<div class="td" style="left:524px;width:40px">12:00</div>
<div class="td" style="left:564px;width:35px">Mon</div>
<div class="td" style="left:599px;width:70px">20/11/2017</div>
<div class="td" style="left:669px;width:40px">12:00</div>
<div class="td r r2" style="left:709px;width:25px">21</div>
<div class="td" style="left:734px;width:50px">On Air…</div>
<div class="td" style="left:784px;width:50px">On Air…</div>
<div class="td r r2" style="left:834px;width:55px">806.30</div>
<div class="td r r2" style="left:889px;width:65px">806.30</div>
<div class="td" style="left:954px;width:75px">Alamo</div>
<div class="td" style="left:1029px;width:25px">yes</div>
<div class="td" style="left:1054px;width:30px">auto</div>
</div>
<div class="tr" style="top:48px">
<div class="td" style="left:0px;width:120px;letter-spacing:-0.19px">Dodge Grand Carava…</div>
<div class="td r" style="left:120px;width:25px">7</div>
<div class="td" style="left:145px;width:199px;letter-spacing:-0.15px">Van(Mini) - Inclusive product - Plus Ex…</div>
<div class="td" style="left:344px;width:75px;letter-spacing:-0.2px">Flexible Car…</div>
<div class="td" style="left:419px;width:35px">Mon</div>
<div class="td" style="left:454px;width:70px">30/10/2017</div>
<div class="td" style="left:524px;width:40px">12:00</div>
<div class="td" style="left:564px;width:35px">Mon</div>
<div class="td" style="left:599px;width:70px">20/11/2017</div>
<div class="td" style="left:669px;width:40px">12:00</div>
<div class="td r r2" style="left:709px;width:25px">21</div>
<div class="td" style="left:734px;width:50px">On Air…</div>
<div class="td" style="left:784px;width:50px">On Air…</div>
<div class="td r r2" style="left:834px;width:55px">862.63</div>
<div class="td r r2" style="left:889px;width:65px">862.63</div>
<div class="td" style="left:954px;width:75px">Alamo</div>
<div class="td" style="left:1029px;width:25px">yes</div>
<div class="td" style="left:1054px;width:30px">auto</div>
</div>
<div class="tr" style="top:63px">
<div class="td" style="left:0px;width:120px;letter-spacing:-0.19px">Dodge Grand Carava…</div>
<div class="td r" style="left:120px;width:25px">7</div>
<div class="td" style="left:145px;width:199px;letter-spacing:-0.15px">Van(Mini) - Inclusive product - Plus Ex…</div>
<div class="td" style="left:344px;width:75px;letter-spacing:-0.2px">Flexible Car…</div>
<div class="td" style="left:419px;width:35px">Mon</div>
<div class="td" style="left:454px;width:70px">30/10/2017</div>
<div class="td" style="left:524px;width:40px">12:00</div>
<div class="td" style="left:564px;width:35px">Mon</div>
<div class="td" style="left:599px;width:70px">20/11/2017</div>
<div class="td" style="left:669px;width:40px">12:00</div>
<div class="td r r2" style="left:709px;width:25px">21</div>
<div class="td" style="left:734px;width:50px">On Air…</div>
<div class="td" style="left:784px;width:50px">On Air…</div>
<div class="td r r2" style="left:834px;width:55px">862.63</div>
<div class="td r r2" style="left:889px;width:65px">862.63</div>
<div class="td" style="left:954px;width:75px">Alamo</div>
<div class="td" style="left:1029px;width:25px">yes</div>
<div class="td" style="left:1054px;width:30px">auto</div>
</div>
<div class="tr" style="top:78px">
<div class="td" style="left:0px;width:120px;letter-spacing:-0.19px">Dodge Grand Carava…</div>
<div class="td r" style="left:120px;width:25px">7</div>
<div class="td" style="left:145px;width:199px;letter-spacing:-0.3px">Van(Mini) - Gold</div>
<div class="td" style="left:344px;width:75px;letter-spacing:-0.2px">Flexible Car…</div>
<div class="td" style="left:419px;width:35px">Mon</div>
<div class="td" style="left:454px;width:70px">30/10/2017</div>
<div class="td" style="left:524px;width:40px">12:00</div>
<div class="td" style="left:564px;width:35px">Mon</div>
<div class="td" style="left:599px;width:70px">20/11/2017</div>
<div class="td" style="left:669px;width:40px">12:00</div>
<div class="td r r2" style="left:709px;width:25px">21</div>
<div class="td" style="left:734px;width:50px">On Air…</div>
<div class="td" style="left:784px;width:50px">On Air…</div>
<div class="td r r2" style="left:834px;width:55px">885.24</div>
<div class="td r r2" style="left:889px;width:65px">885.24</div>
<div class="td" style="left:954px;width:75px">Alamo</div>
<div class="td" style="left:1029px;width:25px">yes</div>
<div class="td" style="left:1054px;width:30px">auto</div>
</div>
<div class="tr" style="top:93px">
<div class="td" style="left:0px;width:120px;letter-spacing:-0.19px">Dodge Grand Carava…</div>
<div class="td r" style="left:120px;width:25px">7</div>
<div class="td" style="left:145px;width:199px;letter-spacing:-0.3px">Van(Mini) - Gold</div>
<div class="td" style="left:344px;width:75px;letter-spacing:-0.2px">Flexible Car…</div>
<div class="td" style="left:419px;width:35px">Mon</div>
<div class="td" style="left:454px;width:70px">30/10/2017</div>
<div class="td" style="left:524px;width:40px">12:00</div>
<div class="td" style="left:564px;width:35px">Mon</div>
<div class="td" style="left:599px;width:70px">20/11/2017</div>
<div class="td" style="left:669px;width:40px">12:00</div>
<div class="td r r2" style="left:709px;width:25px">21</div>
<div class="td" style="left:734px;width:50px">On Air…</div>
<div class="td" style="left:784px;width:50px">On Air…</div>
<div class="td r r2" style="left:834px;width:55px">885.24</div>
<div class="td r r2" style="left:889px;width:65px">885.24</div>
<div class="td" style="left:954px;width:75px">Alamo</div>
<div class="td" style="left:1029px;width:25px">yes</div>
<div class="td" style="left:1054px;width:30px">auto</div>
</div>
<div class="tr" style="top:108px">
<div class="td" style="left:0px;width:120px;letter-spacing:-0.19px">Dodge Grand Carava…</div>
<div class="td r" style="left:120px;width:25px">7</div>
<div class="td" style="left:145px;width:199px;letter-spacing:-0.3px">Van(Mini) - Inclusive GPS</div>
<div class="td" style="left:344px;width:75px;letter-spacing:-0.2px">Flexible Car…</div>
<div class="td" style="left:419px;width:35px">Mon</div>
<div class="td" style="left:454px;width:70px">30/10/2017</div>
<div class="td" style="left:524px;width:40px">12:00</div>
<div class="td" style="left:564px;width:35px">Mon</div>
<div class="td" style="left:599px;width:70px">20/11/2017</div>
<div class="td" style="left:669px;width:40px">12:00</div>
<div class="td r r2" style="left:709px;width:25px">21</div>
<div class="td" style="left:734px;width:50px">On Air…</div>
<div class="td" style="left:784px;width:50px">On Air…</div>
<div class="td r r2" style="left:834px;width:55px">941.26</div>
<div class="td r r2" style="left:889px;width:65px">941.26</div>
<div class="td" style="left:954px;width:75px">Alamo</div>
<div class="td" style="left:1029px;width:25px">yes</div>
<div class="td" style="left:1054px;width:30px">auto</div>
</div>
<div class="tr" style="top:123px">
<div class="td" style="left:0px;width:120px;letter-spacing:-0.19px">Dodge Grand Carava…</div>
<div class="td r" style="left:120px;width:25px">7</div>
<div class="td" style="left:145px;width:199px;letter-spacing:-0.3px">Van(Mini) - Inclusive GPS</div>
<div class="td" style="left:344px;width:75px;letter-spacing:-0.2px">Flexible Car…</div>
<div class="td" style="left:419px;width:35px">Mon</div>
<div class="td" style="left:454px;width:70px">30/10/2017</div>
<div class="td" style="left:524px;width:40px">12:00</div>
<div class="td" style="left:564px;width:35px">Mon</div>
<div class="td" style="left:599px;width:70px">20/11/2017</div>
<div class="td" style="left:669px;width:40px">12:00</div>
<div class="td r r2" style="left:709px;width:25px">21</div>
<div class="td" style="left:734px;width:50px">On Air…</div>
<div class="td" style="left:784px;width:50px">On Air…</div>
<div class="td r r2" style="left:834px;width:55px">941.26</div>
<div class="td r r2" style="left:889px;width:65px">941.26</div>
<div class="td" style="left:954px;width:75px">Alamo</div>
<div class="td" style="left:1029px;width:25px">yes</div>
<div class="td" style="left:1054px;width:30px">auto</div>
</div>
<div class="tr" style="top:138px">
<div class="td" style="left:0px;width:120px;letter-spacing:-0.19px">Dodge Grand Carava…</div>
<div class="td r" style="left:120px;width:25px">7</div>
<div class="td" style="left:145px;width:199px;letter-spacing:-0.26px">Van(Mini) - Gold - Plus Excess Refund</div>
<div class="td" style="left:344px;width:75px;letter-spacing:-0.2px">Flexible Car…</div>
<div class="td" style="left:419px;width:35px">Mon</div>
<div class="td" style="left:454px;width:70px">30/10/2017</div>
<div class="td" style="left:524px;width:40px">12:00</div>
<div class="td" style="left:564px;width:35px">Mon</div>
<div class="td" style="left:599px;width:70px">20/11/2017</div>
<div class="td" style="left:669px;width:40px">12:00</div>
<div class="td r r2" style="left:709px;width:25px">21</div>
<div class="td" style="left:734px;width:50px">On Air…</div>
<div class="td" style="left:784px;width:50px">On Air…</div>
<div class="td r r2" style="left:834px;width:55px">941.57</div>
<div class="td r r2" style="left:889px;width:65px">941.57</div>
<div class="td" style="left:954px;width:75px">Alamo</div>
<div class="td" style="left:1029px;width:25px">yes</div>
<div class="td" style="left:1054px;width:30px">auto</div>
</div>
<div class="tr" style="top:153px">
<div class="td" style="left:0px;width:120px;letter-spacing:-0.19px">Dodge Grand Carava…</div>
<div class="td r" style="left:120px;width:25px">7</div>
<div class="td" style="left:145px;width:199px;letter-spacing:-0.26px">Van(Mini) - Gold - Plus Excess Refund</div>
<div class="td" style="left:344px;width:75px;letter-spacing:-0.2px">Flexible Car…</div>
<div class="td" style="left:419px;width:35px">Mon</div>
<div class="td" style="left:454px;width:70px">30/10/2017</div>
<div class="td" style="left:524px;width:40px">12:00</div>
<div class="td" style="left:564px;width:35px">Mon</div>
<div class="td" style="left:599px;width:70px">20/11/2017</div>
<div class="td" style="left:669px;width:40px">12:00</div>
<div class="td r r2" style="left:709px;width:25px">21</div>
<div class="td" style="left:734px;width:50px">On Air…</div>
<div class="td" style="left:784px;width:50px">On Air…</div>
<div class="td r r2" style="left:834px;width:55px">941.57</div>
<div class="td r r2" style="left:889px;width:65px">941.57</div>
<div class="td" style="left:954px;width:75px">Alamo</div>
<div class="td" style="left:1029px;width:25px">yes</div>
<div class="td" style="left:1054px;width:30px">auto</div>
</div>
<div class="tr" style="top:168px">
<div class="td" style="left:0px;width:120px">Chevrolet Tahoe Or …</div>
<div class="td r" style="left:120px;width:25px">7</div>
<div class="td" style="left:145px;width:199px;letter-spacing:-0.24px">SUV(Full Size) - Inclusive product</div>
<div class="td" style="left:344px;width:75px;letter-spacing:-0.2px">Flexible Car…</div>
<div class="td" style="left:419px;width:35px">Mon</div>
<div class="td" style="left:454px;width:70px">30/10/2017</div>
<div class="td" style="left:524px;width:40px">12:00</div>
<div class="td" style="left:564px;width:35px">Mon</div>
<div class="td" style="left:599px;width:70px">20/11/2017</div>
<div class="td" style="left:669px;width:40px">12:00</div>
<div class="td r r2" style="left:709px;width:25px">21</div>
<div class="td" style="left:734px;width:50px">On Air…</div>
<div class="td" style="left:784px;width:50px">On Air…</div>
<div class="td r r2" style="left:834px;width:55px">981.98</div>
<div class="td r r2" style="left:889px;width:65px">981.98</div>
<div class="td" style="left:954px;width:75px">Alamo</div>
<div class="td" style="left:1029px;width:25px">yes</div>
<div class="td" style="left:1054px;width:30px">auto</div>
</div>
<div class="tr" style="top:183px">
<div class="td" style="left:0px;width:120px">Chevrolet Tahoe Or …</div>
<div class="td r" style="left:120px;width:25px">7</div>
<div class="td" style="left:145px;width:199px;letter-spacing:-0.24px">SUV(Full Size) - Inclusive product</div>
<div class="td" style="left:344px;width:75px;letter-spacing:-0.2px">Flexible Car…</div>
<div class="td" style="left:419px;width:35px">Mon</div>
<div class="td" style="left:454px;width:70px">30/10/2017</div>
<div class="td" style="left:524px;width:40px">12:00</div>
<div class="td" style="left:564px;width:35px">Mon</div>
<div class="td" style="left:599px;width:70px">20/11/2017</div>
<div class="td" style="left:669px;width:40px">12:00</div>
<div class="td r r2" style="left:709px;width:25px">21</div>
<div class="td" style="left:734px;width:50px">On Air…</div>
<div class="td" style="left:784px;width:50px">On Air…</div>
<div class="td r r2" style="left:834px;width:55px">981.98</div>
<div class="td r r2" style="left:889px;width:65px">981.98</div>
<div class="td" style="left:954px;width:75px">Alamo</div>
<div class="td" style="left:1029px;width:25px">yes</div>
<div class="td" style="left:1054px;width:30px">auto</div>
</div>
<div class="tr" style="top:198px">
<div class="td" style="left:0px;width:120px;letter-spacing:-0.19px">Dodge Grand Carava…</div>
<div class="td r" style="left:120px;width:25px">7</div>
<div class="td" style="left:145px;width:199px;letter-spacing:-0.3px">Van(Mini) - Inclusive GPS - Plus Exces…</div>
<div class="td" style="left:344px;width:75px;letter-spacing:-0.2px">Flexible Car…</div>
<div class="td" style="left:419px;width:35px">Mon</div>
<div class="td" style="left:454px;width:70px">30/10/2017</div>
<div class="td" style="left:524px;width:40px">12:00</div>
<div class="td" style="left:564px;width:35px">Mon</div>
<div class="td" style="left:599px;width:70px">20/11/2017</div>
<div class="td" style="left:669px;width:40px">12:00</div>
<div class="td r r2" style="left:709px;width:25px">21</div>
<div class="td" style="left:734px;width:50px">On Air…</div>
<div class="td" style="left:784px;width:50px">On Air…</div>
<div class="td r r2" style="left:834px;width:55px">997.58</div>
<div class="td r r2" style="left:889px;width:65px">997.58</div>
<div class="td" style="left:954px;width:75px">Alamo</div>
<div class="td" style="left:1029px;width:25px">yes</div>
<div class="td" style="left:1054px;width:30px">auto</div>
</div>
<div class="tr" style="top:213px">
<div class="td" style="left:0px;width:120px;letter-spacing:-0.19px">Dodge Grand Carava…</div>
<div class="td r" style="left:120px;width:25px">7</div>
<div class="td" style="left:145px;width:199px;letter-spacing:-0.3px">Van(Mini) - Inclusive GPS - Plus Exces…</div>
<div class="td" style="left:344px;width:75px;letter-spacing:-0.2px">Flexible Car…</div>
<div class="td" style="left:419px;width:35px">Mon</div>
<div class="td" style="left:454px;width:70px">30/10/2017</div>
<div class="td" style="left:524px;width:40px">12:00</div>
<div class="td" style="left:564px;width:35px">Mon</div>
<div class="td" style="left:599px;width:70px">20/11/2017</div>
<div class="td" style="left:669px;width:40px">12:00</div>
<div class="td r r2" style="left:709px;width:25px">21</div>
<div class="td" style="left:734px;width:50px">On Air…</div>
<div class="td" style="left:784px;width:50px">On Air…</div>
<div class="td r r2" style="left:834px;width:55px">997.58</div>
<div class="td r r2" style="left:889px;width:65px">997.58</div>
<div class="td" style="left:954px;width:75px">Alamo</div>
<div class="td" style="left:1029px;width:25px">yes</div>
<div class="td" style="left:1054px;width:30px">auto</div>
</div>
<div class="tr" style="top:228px">
<div class="td" style="left:0px;width:120px;letter-spacing:-0.19px">Dodge Grand Carava…</div>
<div class="td r" style="left:120px;width:25px">7</div>
<div class="td" style="left:145px;width:199px;letter-spacing:-0.46px">Van(Mini) - Gold GPS</div>
<div class="td" style="left:344px;width:75px;letter-spacing:-0.2px">Flexible Car…</div>
<div class="td" style="left:419px;width:35px">Mon</div>
<div class="td" style="left:454px;width:70px">30/10/2017</div>
<div class="td" style="left:524px;width:40px">12:00</div>
<div class="td" style="left:564px;width:35px">Mon</div>
<div class="td" style="left:599px;width:70px">20/11/2017</div>
<div class="td" style="left:669px;width:40px">12:00</div>
<div class="td r r2" style="left:709px;width:25px">21</div>
<div class="td" style="left:734px;width:50px">On Air…</div>
<div class="td" style="left:784px;width:50px">On Air…</div>
<div class="td r r2" style="left:834px;width:55px">1,015.08</div>
<div class="td r r2" style="left:889px;width:65px">1,015.08</div>
<div class="td" style="left:954px;width:75px">Alamo</div>
<div class="td" style="left:1029px;width:25px">yes</div>
<div class="td" style="left:1054px;width:30px">auto</div>
</div>
<div class="tr" style="top:243px">
<div class="td" style="left:0px;width:120px;letter-spacing:-0.19px">Dodge Grand Carava…</div>
<div class="td r" style="left:120px;width:25px">7</div>
<div class="td" style="left:145px;width:199px;letter-spacing:-0.46px">Van(Mini) - Gold GPS</div>
<div class="td" style="left:344px;width:75px;letter-spacing:-0.2px">Flexible Car…</div>
<div class="td" style="left:419px;width:35px">Mon</div>
<div class="td" style="left:454px;width:70px">30/10/2017</div>
<div class="td" style="left:524px;width:40px">12:00</div>
<div class="td" style="left:564px;width:35px">Mon</div>
<div class="td" style="left:599px;width:70px">20/11/2017</div>
<div class="td" style="left:669px;width:40px">12:00</div>
<div class="td r r2" style="left:709px;width:25px">21</div>
<div class="td" style="left:734px;width:50px">On Air…</div>
<div class="td" style="left:784px;width:50px">On Air…</div>
<div class="td r r2" style="left:834px;width:55px">1,015.08</div>
<div class="td r r2" style="left:889px;width:65px">1,015.08</div>
<div class="td" style="left:954px;width:75px">Alamo</div>
<div class="td" style="left:1029px;width:25px">yes</div>
<div class="td" style="left:1054px;width:30px">auto</div>
</div>
<div class="tr" style="top:258px">
<div class="td" style="left:0px;width:120px">Chevrolet Tahoe Or …</div>
<div class="td r" style="left:120px;width:25px">7</div>
<div class="td" style="left:145px;width:199px;letter-spacing:-0.46px">SUV(Full Size) - Gold</div>
<div class="td" style="left:344px;width:75px;letter-spacing:-0.2px">Flexible Car…</div>
<div class="td" style="left:419px;width:35px">Mon</div>
<div class="td" style="left:454px;width:70px">30/10/2017</div>
<div class="td" style="left:524px;width:40px">12:00</div>
<div class="td" style="left:564px;width:35px">Mon</div>
<div class="td" style="left:599px;width:70px">20/11/2017</div>
<div class="td" style="left:669px;width:40px">12:00</div>
<div class="td r r2" style="left:709px;width:25px">21</div>
<div class="td" style="left:734px;width:50px">On Air…</div>
<div class="td" style="left:784px;width:50px">On Air…</div>
<div class="td r r2" style="left:834px;width:55px">1,038.00</div>
<div class="td r r2" style="left:889px;width:65px">1,038.00</div>
<div class="td" style="left:954px;width:75px">Alamo</div>
<div class="td" style="left:1029px;width:25px">yes</div>
<div class="td" style="left:1054px;width:30px">auto</div>
</div>
<div class="tr" style="top:273px">
<div class="td" style="left:0px;width:120px">Chevrolet Tahoe Or …</div>
<div class="td r" style="left:120px;width:25px">7</div>
<div class="td" style="left:145px;width:199px;letter-spacing:-0.46px">SUV(Full Size) - Gold</div>
<div class="td" style="left:344px;width:75px;letter-spacing:-0.2px">Flexible Car…</div>
<div class="td" style="left:419px;width:35px">Mon</div>
<div class="td" style="left:454px;width:70px">30/10/2017</div>
<div class="td" style="left:524px;width:40px">12:00</div>
<div class="td" style="left:564px;width:35px">Mon</div>
<div class="td" style="left:599px;width:70px">20/11/2017</div>
<div class="td" style="left:669px;width:40px">12:00</div>
<div class="td r r2" style="left:709px;width:25px">21</div>
<div class="td" style="left:734px;width:50px">On Air…</div>
<div class="td" style="left:784px;width:50px">On Air…</div>
<div class="td r r2" style="left:834px;width:55px">1,038.00</div>
<div class="td r r2" style="left:889px;width:65px">1,038.00</div>
<div class="td" style="left:954px;width:75px">Alamo</div>
<div class="td" style="left:1029px;width:25px">yes</div>
<div class="td" style="left:1054px;width:30px">auto</div>
</div>
<div class="tr" style="top:288px">
<div class="td" style="left:0px;width:120px">Chevrolet Tahoe Or …</div>
<div class="td r" style="left:120px;width:25px">7</div>
<div class="td" style="left:145px;width:199px;letter-spacing:-0.23px">SUV(Full Size) - Inclusive product - Plu…</div>
<div class="td" style="left:344px;width:75px;letter-spacing:-0.2px">Flexible Car…</div>
<div class="td" style="left:419px;width:35px">Mon</div>
<div class="td" style="left:454px;width:70px">30/10/2017</div>
<div class="td" style="left:524px;width:40px">12:00</div>
<div class="td" style="left:564px;width:35px">Mon</div>
<div class="td" style="left:599px;width:70px">20/11/2017</div>
<div class="td" style="left:669px;width:40px">12:00</div>
<div class="td r r2" style="left:709px;width:25px">21</div>
<div class="td" style="left:734px;width:50px">On Air…</div>
<div class="td" style="left:784px;width:50px">On Air…</div>
<div class="td r r2" style="left:834px;width:55px">1,038.31</div>
<div class="td r r2" style="left:889px;width:65px">1,038.31</div>
<div class="td" style="left:954px;width:75px">Alamo</div>
<div class="td" style="left:1029px;width:25px">yes</div>
<div class="td" style="left:1054px;width:30px">auto</div>
</div>
<div class="tr" style="top:303px">
<div class="td" style="left:0px;width:120px">Chevrolet Tahoe Or …</div>
<div class="td r" style="left:120px;width:25px">7</div>
<div class="td" style="left:145px;width:199px;letter-spacing:-0.23px">SUV(Full Size) - Inclusive product - Plu…</div>
<div class="td" style="left:344px;width:75px;letter-spacing:-0.2px">Flexible Car…</div>
<div class="td" style="left:419px;width:35px">Mon</div>
<div class="td" style="left:454px;width:70px">30/10/2017</div>
<div class="td" style="left:524px;width:40px">12:00</div>
<div class="td" style="left:564px;width:35px">Mon</div>
<div class="td" style="left:599px;width:70px">20/11/2017</div>
<div class="td" style="left:669px;width:40px">12:00</div>
<div class="td r r2" style="left:709px;width:25px">21</div>
<div class="td" style="left:734px;width:50px">On Air…</div>
<div class="td" style="left:784px;width:50px">On Air…</div>
<div class="td r r2" style="left:834px;width:55px">1,038.31</div>
<div class="td r r2" style="left:889px;width:65px">1,038.31</div>
<div class="td" style="left:954px;width:75px">Alamo</div>
<div class="td" style="left:1029px;width:25px">yes</div>
<div class="td" style="left:1054px;width:30px">auto</div>
</div>
<div class="tr" style="top:318px">
<div class="td" style="left:0px;width:120px;letter-spacing:-0.19px">Dodge Grand Carava…</div>
<div class="td r" style="left:120px;width:25px">7</div>
<div class="td" style="left:145px;width:199px;letter-spacing:-0.34px">Van(Mini) - Gold GPS - Plus Excess Ref…</div>
<div class="td" style="left:344px;width:75px;letter-spacing:-0.2px">Flexible Car…</div>
<div class="td" style="left:419px;width:35px">Mon</div>
<div class="td" style="left:454px;width:70px">30/10/2017</div>
<div class="td" style="left:524px;width:40px">12:00</div>
<div class="td" style="left:564px;width:35px">Mon</div>
<div class="td" style="left:599px;width:70px">20/11/2017</div>
<div class="td" style="left:669px;width:40px">12:00</div>
<div class="td r r2" style="left:709px;width:25px">21</div>
<div class="td" style="left:734px;width:50px">On Air…</div>
<div class="td" style="left:784px;width:50px">On Air…</div>
<div class="td r r2" style="left:834px;width:55px">1,071.41</div>
<div class="td r r2" style="left:889px;width:65px">1,071.41</div>
<div class="td" style="left:954px;width:75px">Alamo</div>
<div class="td" style="left:1029px;width:25px">yes</div>
<div class="td" style="left:1054px;width:30px">auto</div>
</div>
<div class="tr" style="top:333px">
<div class="td" style="left:0px;width:120px;letter-spacing:-0.19px">Dodge Grand Carava…</div>
<div class="td r" style="left:120px;width:25px">7</div>
<div class="td" style="left:145px;width:199px;letter-spacing:-0.34px">Van(Mini) - Gold GPS - Plus Excess Ref…</div>
<div class="td" style="left:344px;width:75px;letter-spacing:-0.2px">Flexible Car…</div>
<div class="td" style="left:419px;width:35px">Mon</div>
<div class="td" style="left:454px;width:70px">30/10/2017</div>
<div class="td" style="left:524px;width:40px">12:00</div>
<div class="td" style="left:564px;width:35px">Mon</div>
<div class="td" style="left:599px;width:70px">20/11/2017</div>
<div class="td" style="left:669px;width:40px">12:00</div>
<div class="td r r2" style="left:709px;width:25px">21</div>
<div class="td" style="left:734px;width:50px">On Air…</div>
<div class="td" style="left:784px;width:50px">On Air…</div>
<div class="td r r2" style="left:834px;width:55px">1,071.41</div>
<div class="td r r2" style="left:889px;width:65px">1,071.41</div>
<div class="td" style="left:954px;width:75px">Alamo</div>
<div class="td" style="left:1029px;width:25px">yes</div>
<div class="td" style="left:1054px;width:30px">auto</div>
</div>
<div class="tr" style="top:348px">
<div class="td" style="left:0px;width:120px">Chevrolet Tahoe Or …</div>
<div class="td r" style="left:120px;width:25px">7</div>
<div class="td" style="left:145px;width:199px;letter-spacing:-0.36px">SUV(Full Size) - Gold - Plus Excess Ref…</div>
<div class="td" style="left:344px;width:75px;letter-spacing:-0.2px">Flexible Car…</div>
<div class="td" style="left:419px;width:35px">Mon</div>
<div class="td" style="left:454px;width:70px">30/10/2017</div>
<div class="td" style="left:524px;width:40px">12:00</div>
<div class="td" style="left:564px;width:35px">Mon</div>
<div class="td" style="left:599px;width:70px">20/11/2017</div>
<div class="td" style="left:669px;width:40px">12:00</div>
<div class="td r r2" style="left:709px;width:25px">21</div>
<div class="td" style="left:734px;width:50px">On Air…</div>
<div class="td" style="left:784px;width:50px">On Air…</div>
<div class="td r r2" style="left:834px;width:55px">1,094.33</div>
<div class="td r r2" style="left:889px;width:65px">1,094.33</div>
<div class="td" style="left:954px;width:75px">Alamo</div>
<div class="td" style="left:1029px;width:25px">yes</div>
<div class="td" style="left:1054px;width:30px">auto</div>
</div>
<div class="tr" style="top:363px">
<div class="td" style="left:0px;width:120px">Chevrolet Tahoe Or …</div>
<div class="td r" style="left:120px;width:25px">7</div>
<div class="td" style="left:145px;width:199px;letter-spacing:-0.36px">SUV(Full Size) - Gold - Plus Excess Ref…</div>
<div class="td" style="left:344px;width:75px;letter-spacing:-0.2px">Flexible Car…</div>
<div class="td" style="left:419px;width:35px">Mon</div>
<div class="td" style="left:454px;width:70px">30/10/2017</div>
<div class="td" style="left:524px;width:40px">12:00</div>
<div class="td" style="left:564px;width:35px">Mon</div>
<div class="td" style="left:599px;width:70px">20/11/2017</div>
<div class="td" style="left:669px;width:40px">12:00</div>
<div class="td r r2" style="left:709px;width:25px">21</div>
<div class="td" style="left:734px;width:50px">On Air…</div>
<div class="td" style="left:784px;width:50px">On Air…</div>
<div class="td r r2" style="left:834px;width:55px">1,094.33</div>
<div class="td r r2" style="left:889px;width:65px">1,094.33</div>
<div class="td" style="left:954px;width:75px">Alamo</div>
<div class="td" style="left:1029px;width:25px">yes</div>
<div class="td" style="left:1054px;width:30px">auto</div>
</div>
<div class="tr" style="top:378px">
<div class="td" style="left:0px;width:120px">Chevrolet Tahoe Or …</div>
<div class="td r" style="left:120px;width:25px">7</div>
<div class="td" style="left:145px;width:199px;letter-spacing:-0.43px">SUV(Full Size) - Inclusive GPS</div>
<div class="td" style="left:344px;width:75px;letter-spacing:-0.2px">Flexible Car…</div>
<div class="td" style="left:419px;width:35px">Mon</div>
<div class="td" style="left:454px;width:70px">30/10/2017</div>
<div class="td" style="left:524px;width:40px">12:00</div>
<div class="td" style="left:564px;width:35px">Mon</div>
<div class="td" style="left:599px;width:70px">20/11/2017</div>
<div class="td" style="left:669px;width:40px">12:00</div>
<div class="td r r2" style="left:709px;width:25px">21</div>
<div class="td" style="left:734px;width:50px">On Air…</div>
<div class="td" style="left:784px;width:50px">On Air…</div>
<div class="td r r2" style="left:834px;width:55px">1,116.91</div>
<div class="td r r2" style="left:889px;width:65px">1,116.91</div>
<div class="td" style="left:954px;width:75px">Alamo</div>
<div class="td" style="left:1029px;width:25px">yes</div>
<div class="td" style="left:1054px;width:30px">auto</div>
</div>
 </div>
 <!-- scrollbar -->
 <div style="left:1354px;top:0;width:16px;height:384px;background:#fff;background-image:repeating-conic-gradient(#fff 0 25%,#d6d3ce 0 50%);background-size:2px 2px"></div>
 <div class="sb" style="left:1354px;top:0;width:16px;height:16px"><div style="left:3px;top:4px;border:4px solid transparent;border-bottom:4px solid #000;border-top:0"></div></div>
 <div class="sb" style="left:1354px;top:16px;width:16px;height:114px"></div>
 <div class="sb" style="left:1354px;top:368px;width:16px;height:16px"><div style="left:3px;top:5px;border:4px solid transparent;border-top:4px solid #000;border-bottom:0"></div></div>
</div></div>

<!-- status bar -->
<div class="t" style="left:764px;top:832px;letter-spacing:-0.19px">User: 427 - Shamaura Prause</div>
<div class="t" style="left:916px;top:832px">Retailer: 'Ocean-Florida'</div>
<div class="t" style="left:1042px;top:832px">Client: none</div>
<div class="t" style="left:1540px;top:832px;letter-spacing:-0.4px">13:47 GMT</div>
<div style="left:0;top:857px;width:1600px;height:3px;background:linear-gradient(#848284,#424142)"></div>
</body></html>
